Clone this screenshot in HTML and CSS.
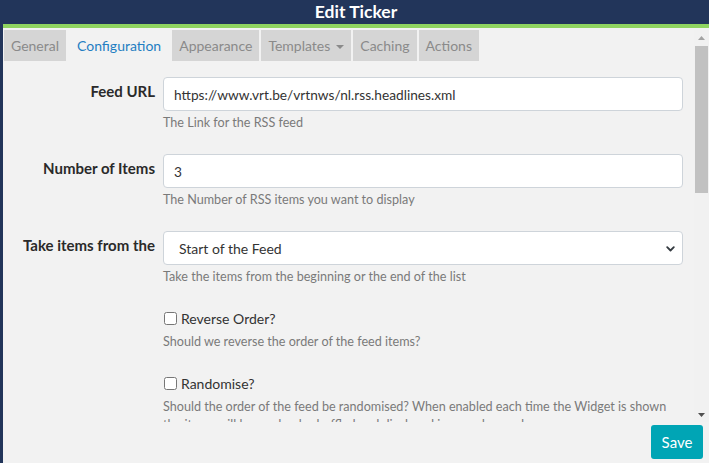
FILE: index.html
```html
<!DOCTYPE html>
<html>
<head>
    <link rel="stylesheet" href="styles.css">
</head>
<body>
    <div class="modal">
        <div class="modal-header">
            <h1 class="modal-title">Edit Ticker</h1>
        </div>

        <div class="modal-body">
            <div class="scroll-content">
                <ul class="tabs">
                    <li class="tab">General</li>
                    <li class="tab active">Configuration</li>
                    <li class="tab">Appearance</li>
                    <li class="tab dropdown">Templates</li>
                    <li class="tab">Caching</li>
                    <li class="tab">Actions</li>
                </ul>

                <form class="form">
                    <div class="form-group">
                        <label class="col-label">Feed URL</label>
                        <div class="col-field">
                            <input class="form-control" type="text" value="https://www.vrt.be/vrtnws/nl.rss.headlines.xml">
                            <p class="help">The Link for the RSS feed</p>
                        </div>
                    </div>

                    <div class="form-group">
                        <label class="col-label">Number of Items</label>
                        <div class="col-field">
                            <input class="form-control" type="text" value="3">
                            <p class="help">The Number of RSS items you want to display</p>
                        </div>
                    </div>

                    <div class="form-group">
                        <label class="col-label">Take items from the</label>
                        <div class="col-field">
                            <div class="select-wrap">
                                <select class="form-control select">
                                    <option>Start of the Feed</option>
                                    <option>End of the Feed</option>
                                </select>
                                <svg class="chevron" width="9" height="6" viewBox="0 0 9 6" fill="none" stroke="#343a40" stroke-width="1.8" stroke-linecap="round" stroke-linejoin="round">
                                    <polyline points="1.2 1.2 4.5 4.5 7.8 1.2"></polyline>
                                </svg>
                            </div>
                            <p class="help">Take the items from the beginning or the end of the list</p>
                        </div>
                    </div>

                    <div class="form-group">
                        <div class="col-field check-field">
                            <label class="check"><input type="checkbox"> Reverse Order?</label>
                            <p class="help">Should we reverse the order of the feed items?</p>
                        </div>
                    </div>

                    <div class="form-group">
                        <div class="col-field check-field">
                            <label class="check"><input type="checkbox"> Randomise?</label>
                            <p class="help">Should the order of the feed be randomised? When enabled each time the Widget is shown the items will be randomly shuffled and displayed in a random order.</p>
                        </div>
                    </div>
                </form>
            </div>

            <div class="scrollbar">
                <div class="sb-button">
                    <svg width="7" height="4" viewBox="0 0 7 4"><polygon points="0 4 3.5 0 7 4" fill="#a3a3a3"></polygon></svg>
                </div>
                <div class="sb-thumb"></div>
                <div class="sb-track"></div>
                <div class="sb-button">
                    <svg width="7" height="4" viewBox="0 0 7 4"><polygon points="0 0 7 0 3.5 4" fill="#505050"></polygon></svg>
                </div>
            </div>
        </div>

        <div class="modal-footer">
            <button class="btn-save" type="button">Save</button>
        </div>
    </div>
</body>
</html>
```

FILE: styles.css
```css
body {
    margin: 0;
    padding: 0;
    background: #f2f2f2;
    font-family: Lato, "Open Sans", sans-serif;
    color: #333;
}

.modal {
    height: 463px;
    display: flex;
    flex-direction: column;
    border-left: 3px solid #22355a;
    overflow: hidden;
}

/* Header */
.modal-header {
    height: 24px;
    background: #22355a;
    border-bottom: 4px solid #8fd460;
    display: flex;
    align-items: center;
    justify-content: center;
}

.modal-title {
    margin: 0;
    color: white;
    font-size: 17.5px;
    font-weight: 700;
    line-height: 24px;
}

/* Body */
.modal-body {
    flex: 1;
    display: flex;
    margin-top: 2px;
    min-height: 0;
}

.scroll-content {
    flex: 1;
    overflow: hidden;
    padding-left: 1px;
}

.tabs {
    display: flex;
    gap: 2px;
    margin: 0;
    padding: 0;
    list-style: none;
}

.tab {
    height: 31px;
    line-height: 31px;
    padding: 0 7px;
    background: #d5d5d5;
    color: #8a8a8a;
    font-size: 14px;
}

.tab.active {
    background: transparent;
    color: #1f7ec2;
    padding: 0 9px;
}

.tab.dropdown::after {
    content: "";
    display: inline-block;
    margin-left: 6px;
    vertical-align: middle;
    border-top: 4px solid #8a8a8a;
    border-left: 4px solid transparent;
    border-right: 4px solid transparent;
}

.form {
    padding: 16px 11px 0 4px;
}

.form-group {
    display: grid;
    grid-template-columns: 147px 1fr;
    column-gap: 8px;
    margin-bottom: 22px;
}

.col-label {
    text-align: right;
    font-weight: 700;
    font-size: 15px;
    line-height: 20px;
    padding-top: 4px;
    color: #2a2a2a;
}

.col-field {
    min-width: 0;
}

.check-field {
    grid-column: 2;
}

.form-control {
    display: block;
    width: 100%;
    height: 34px;
    box-sizing: border-box;
    border: 1px solid #ced4da;
    border-radius: 4px;
    padding: 0 10px;
    background: white;
    font-family: inherit;
    font-size: 13.7px;
    color: #333;
    margin: 0;
}

.select-wrap {
    position: relative;
}

.select {
    appearance: none;
    -webkit-appearance: none;
    padding-left: 15px;
    font-size: 14px;
}

.chevron {
    position: absolute;
    right: 8px;
    top: 15px;
}

.help {
    margin: 3px 0 0;
    font-size: 12.6px;
    line-height: 18px;
    color: #7a7a7a;
}

.check-field .help {
    margin-top: 4px;
}

.check {
    display: flex;
    align-items: center;
    font-size: 14px;
    line-height: 21px;
    color: #333;
}

.check input {
    width: 13px;
    height: 13px;
    margin: 0 4px 0 1px;
}

/* Scrollbar */
.scrollbar {
    width: 15px;
    display: flex;
    flex-direction: column;
    background: #f1f1f1;
}

.sb-button {
    height: 15px;
    display: flex;
    align-items: center;
    justify-content: center;
}

.sb-thumb {
    height: 147px;
    margin: 1px 1px 0 1px;
    background: #c1c1c1;
}

.sb-track {
    flex: 1;
}

/* Footer */
.modal-footer {
    height: 41px;
    display: flex;
    justify-content: flex-end;
    align-items: flex-start;
    padding: 3px 6px 0 0;
    box-sizing: border-box;
}

.btn-save {
    width: 52px;
    height: 34px;
    background: #00a5b5;
    color: white;
    border: none;
    border-radius: 3px;
    font-family: inherit;
    font-size: 15px;
    cursor: pointer;
}
```
